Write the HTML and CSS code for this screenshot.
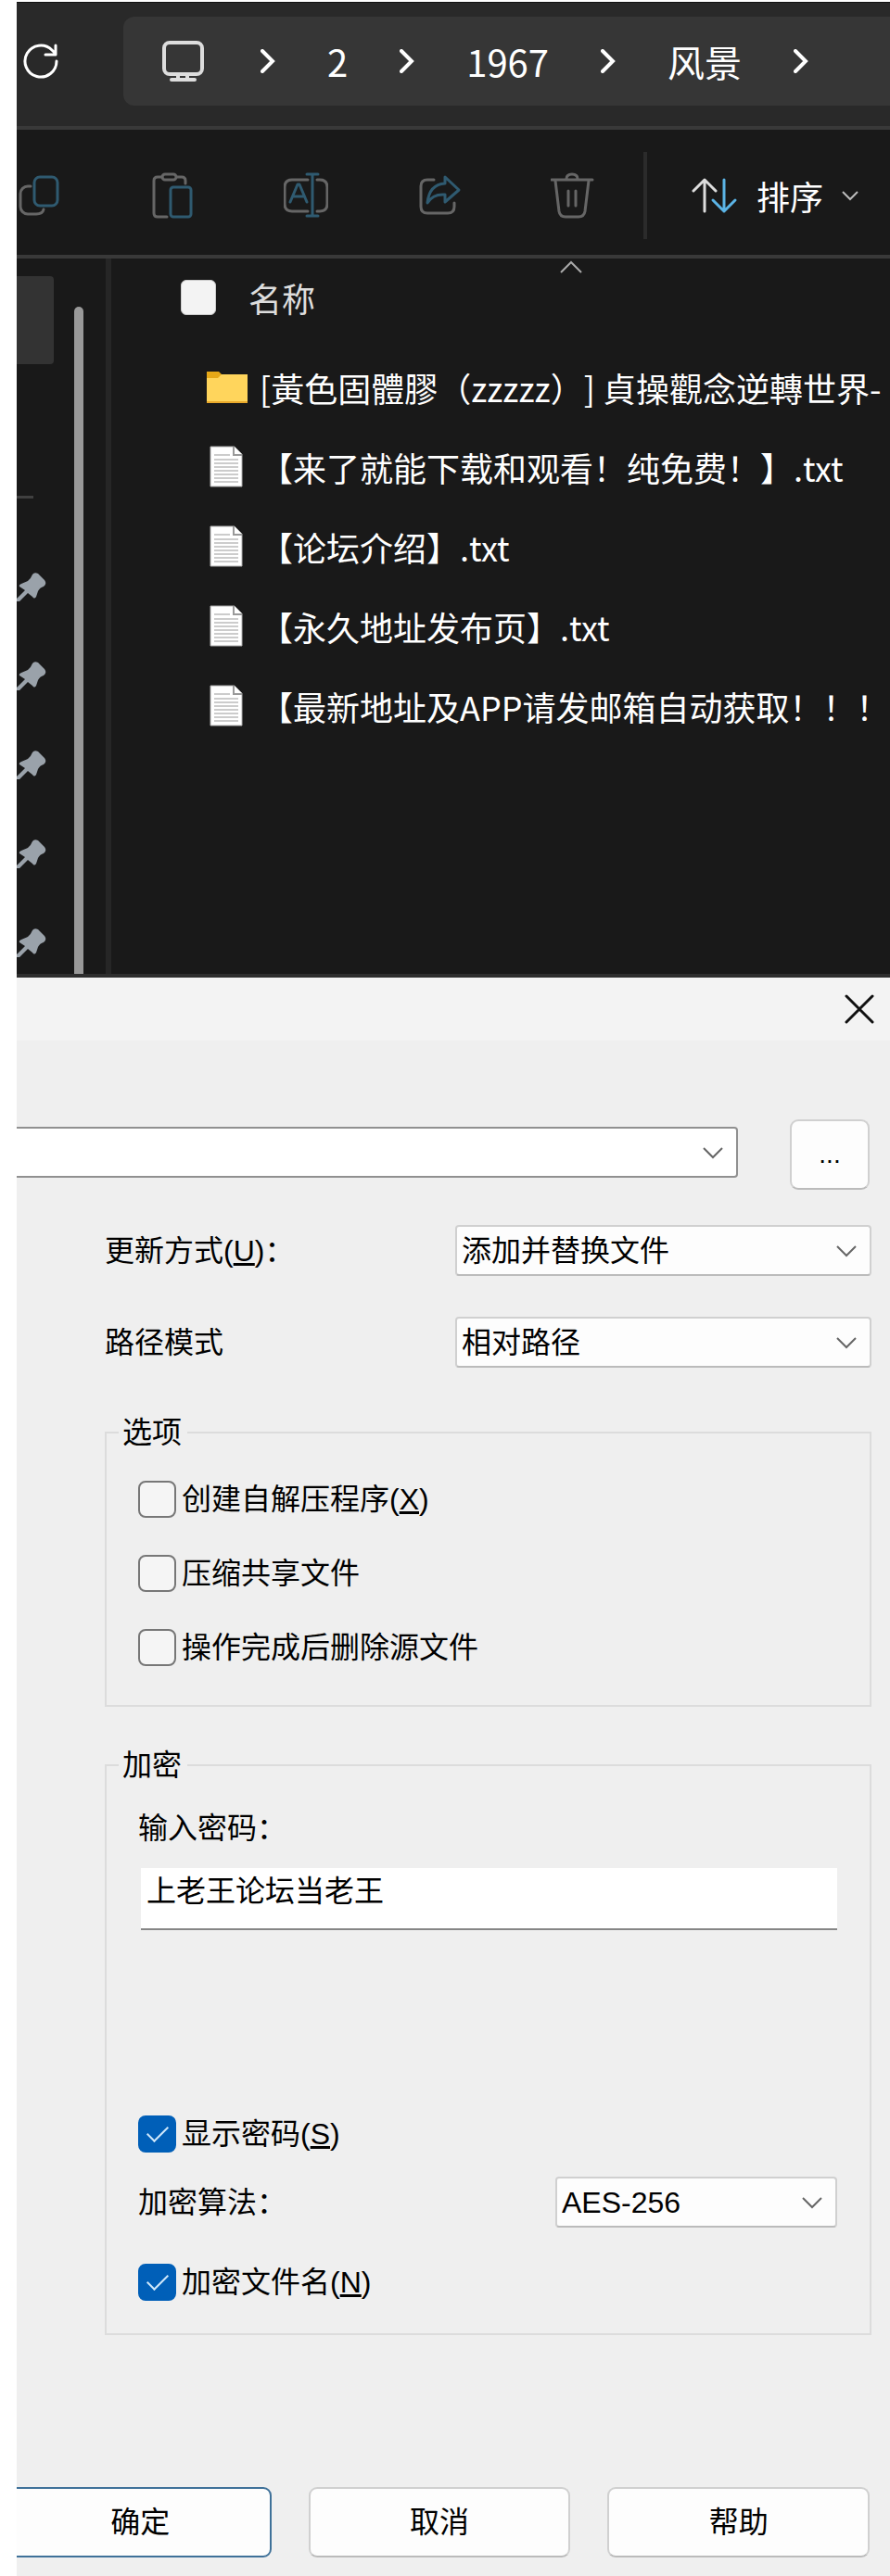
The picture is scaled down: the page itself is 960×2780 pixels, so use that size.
FILE: index.html
```html
<!DOCTYPE html>
<html lang="zh-CN">
<head>
  <meta charset="UTF-8">
  <meta name="viewport" content="width=device-width, initial-scale=1.0">
  <title>风景</title>
  <link rel="stylesheet" href="styles.css">
</head>
<body>
  <section class="explorer">
    <div class="address-bar">
      <button type="button" class="icon-btn refresh" aria-label="刷新">
        <svg width="40" height="40" viewBox="0 0 40 40" fill="none" stroke="#fff" stroke-width="3" stroke-linecap="round" stroke-linejoin="round">
          <path d="M37 20A17 17 0 1 1 32 8L36 12M36 3v10H25"/>
        </svg>
      </button>
      <nav class="breadcrumbs">
        <svg class="monitor" width="48" height="46" viewBox="0 0 48 46" fill="none" stroke="#ddd" stroke-width="4" stroke-linecap="round">
          <rect x="4" y="3" width="41" height="34" rx="6"/>
          <path d="M19 38v5M29 38v5M12 43h25"/>
        </svg>
        <svg class="crumb-arrow" width="16" height="26" viewBox="0 0 16 26"><path d="M2 2l11 11L2 24"/></svg>
        <a href="#">2</a>
        <svg class="crumb-arrow" width="16" height="26" viewBox="0 0 16 26"><path d="M2 2l11 11L2 24"/></svg>
        <a href="#">1967</a>
        <svg class="crumb-arrow" width="16" height="26" viewBox="0 0 16 26"><path d="M2 2l11 11L2 24"/></svg>
        <a href="#">风景</a>
        <svg class="crumb-arrow" width="16" height="26" viewBox="0 0 16 26"><path d="M2 2l11 11L2 24"/></svg>
      </nav>
    </div>

    <div class="toolbar">
      <button type="button" class="icon-btn" aria-label="复制">
        <svg class="tool-icon" width="48" height="52" viewBox="0 0 48 52">
          <path class="gray" d="M15 16H12a8 8 0 0 0-8 8v14a8 8 0 0 0 8 8h9q7 0 8-5"/>
          <rect class="blue" x="19" y="6" width="25" height="31" rx="6"/>
        </svg>
      </button>
      <button type="button" class="icon-btn" aria-label="粘贴">
        <svg class="tool-icon" width="48" height="52" viewBox="0 0 48 52">
          <path class="gray" d="M18 49H8q-4 0-4-4V10q0-4 4-4h5M29 6h5q4 0 4 4v3"/>
          <rect class="gray" x="13" y="3" width="15" height="6" rx="3"/>
          <rect class="blue" x="22" y="17" width="22" height="32" rx="3"/>
        </svg>
      </button>
      <button type="button" class="icon-btn" aria-label="重命名">
        <svg class="tool-icon" width="48" height="52" viewBox="0 0 48 52">
          <path class="gray" d="M26 9H9q-8 0-8 8v18q0 8 8 8h17M36 9h3q8 0 8 8v18q0 8-8 8h-3"/>
          <path class="blue" d="M7 33l8-19h2l8 19M10 27h12M31 4v43M25 3h12M25 48h12"/>
        </svg>
      </button>
      <button type="button" class="icon-btn" aria-label="共享">
        <svg class="tool-icon" width="48" height="52" viewBox="0 0 48 52">
          <path class="gray" d="M18 9H11q-7 0-7 7v22q0 7 7 7h22q7 0 7-7v-4"/>
          <path class="blue" d="M11 34Q13 14 30 13V6l15 14-15 13v-8Q17 24 11 34z"/>
        </svg>
      </button>
      <button type="button" class="icon-btn" aria-label="删除">
        <svg class="tool-icon" width="48" height="52" viewBox="0 0 48 52">
          <path class="gray" d="M1 9h44M5 10l4 33q1 6 7 6h14q6 0 7-6l4-33M17 8q0-5 6-5t6 5M19 21v16M27 21v16"/>
        </svg>
      </button>
      <span class="toolbar-divider"></span>
      <button type="button" class="sort-btn">
        <svg width="50" height="40" viewBox="0 0 50 40" fill="none" stroke-width="3" stroke-linecap="round" stroke-linejoin="round">
          <path stroke="#ddd" d="M14 37V3M2 15L14 3l12 12"/>
          <path stroke="#5bb4e6" d="M35 3v34M23 25l12 12 12-12"/>
        </svg>
        <span>排序</span>
        <svg width="18" height="12" viewBox="0 0 18 12" fill="none" stroke="#bbb" stroke-width="2"><path d="M1 2l8 8 8-8"/></svg>
      </button>
    </div>

    <div class="explorer-body">
      <aside class="sidebar">
        <div class="nav-column">
          <span class="nav-selected"></span>
          <span class="nav-line"></span>
          <div class="pins">
            <svg class="pin" width="32" height="32" viewBox="0 0 32 32"><path d="M17 2Q19-1 23 1L30 8Q33 12 29 15Q25 16 23 20L21 26Q19 29 17 26L12 22L3 31L0 31V28L9 19L3 15Q2 13 5 12L12 9Q15 7 17 2z"/></svg>
            <svg class="pin" width="32" height="32" viewBox="0 0 32 32"><path d="M17 2Q19-1 23 1L30 8Q33 12 29 15Q25 16 23 20L21 26Q19 29 17 26L12 22L3 31L0 31V28L9 19L3 15Q2 13 5 12L12 9Q15 7 17 2z"/></svg>
            <svg class="pin" width="32" height="32" viewBox="0 0 32 32"><path d="M17 2Q19-1 23 1L30 8Q33 12 29 15Q25 16 23 20L21 26Q19 29 17 26L12 22L3 31L0 31V28L9 19L3 15Q2 13 5 12L12 9Q15 7 17 2z"/></svg>
            <svg class="pin" width="32" height="32" viewBox="0 0 32 32"><path d="M17 2Q19-1 23 1L30 8Q33 12 29 15Q25 16 23 20L21 26Q19 29 17 26L12 22L3 31L0 31V28L9 19L3 15Q2 13 5 12L12 9Q15 7 17 2z"/></svg>
            <svg class="pin" width="32" height="32" viewBox="0 0 32 32"><path d="M17 2Q19-1 23 1L30 8Q33 12 29 15Q25 16 23 20L21 26Q19 29 17 26L12 22L3 31L0 31V28L9 19L3 15Q2 13 5 12L12 9Q15 7 17 2z"/></svg>
          </div>
        </div>
        <span class="scroll-thumb"></span>
      </aside>

      <div class="files">
        <div class="files-header">
          <input type="checkbox" id="selectAll" class="select-all">
          <label for="selectAll">名称</label>
          <svg class="sort-mark" width="24" height="14" viewBox="0 0 24 14" fill="none" stroke="#aaa" stroke-width="2"><path d="M1 13L12 2l11 11"/></svg>
        </div>
        <ul class="file-list">
          <li>
            <svg class="file-icon" width="46" height="46" viewBox="0 0 46 46">
              <path fill="#e6a817" d="M1 6h13l4 4v9H1z"/>
              <path fill="#ffd55c" d="M1 13h12l4-4h28v29q0 1-1 1H2q-1 0-1-1z"/>
              <path fill="#e9a92b" d="M1 38h44v2H1z"/>
            </svg>
            <span>[黃色固體膠（zzzzz）] 貞操觀念逆轉世界-</span>
          </li>
          <li>
            <svg class="file-icon" width="46" height="46" viewBox="0 0 46 46">
              <path fill="#fff" stroke="#aaa" d="M5 1h26l8 8v35H5z"/>
              <path fill="none" stroke="#999" stroke-width="2" d="M30 1v9h9"/>
              <path stroke="#999" d="M9 10h17M9 15h26M9 19h26M9 23h26M9 27h26M9 31h26M9 35h26M9 39h26"/>
            </svg>
            <span>【来了就能下载和观看！纯免费！】.txt</span>
          </li>
          <li>
            <svg class="file-icon" width="46" height="46" viewBox="0 0 46 46">
              <path fill="#fff" stroke="#aaa" d="M5 1h26l8 8v35H5z"/>
              <path fill="none" stroke="#999" stroke-width="2" d="M30 1v9h9"/>
              <path stroke="#999" d="M9 10h17M9 15h26M9 19h26M9 23h26M9 27h26M9 31h26M9 35h26M9 39h26"/>
            </svg>
            <span>【论坛介绍】.txt</span>
          </li>
          <li>
            <svg class="file-icon" width="46" height="46" viewBox="0 0 46 46">
              <path fill="#fff" stroke="#aaa" d="M5 1h26l8 8v35H5z"/>
              <path fill="none" stroke="#999" stroke-width="2" d="M30 1v9h9"/>
              <path stroke="#999" d="M9 10h17M9 15h26M9 19h26M9 23h26M9 27h26M9 31h26M9 35h26M9 39h26"/>
            </svg>
            <span>【永久地址发布页】.txt</span>
          </li>
          <li>
            <svg class="file-icon" width="46" height="46" viewBox="0 0 46 46">
              <path fill="#fff" stroke="#aaa" d="M5 1h26l8 8v35H5z"/>
              <path fill="none" stroke="#999" stroke-width="2" d="M30 1v9h9"/>
              <path stroke="#999" d="M9 10h17M9 15h26M9 19h26M9 23h26M9 27h26M9 31h26M9 35h26M9 39h26"/>
            </svg>
            <span>【最新地址及APP请发邮箱自动获取！！！</span>
          </li>
        </ul>
      </div>
    </div>
  </section>

  <form class="dialog">
    <div class="title-bar">
      <button type="button" class="icon-btn" aria-label="关闭">
        <svg width="32" height="32" viewBox="0 0 32 32" fill="none" stroke="#111" stroke-width="3" stroke-linecap="round"><path d="M2 2l28 28M30 2L2 30"/></svg>
      </button>
    </div>

    <div class="dialog-body">
      <div class="archive-row">
        <div class="select-box archive">
          <select aria-label="压缩包"><option></option></select>
          <svg class="chevron" width="22" height="14" viewBox="0 0 22 14"><path d="M1 2l10 10L21 2"/></svg>
        </div>
        <button type="button" class="btn browse">...</button>
      </div>

      <div class="field-row">
        <label for="updateMode">更新方式(<u>U</u>)：</label>
        <div class="select-box">
          <select id="updateMode"><option>添加并替换文件</option></select>
          <svg class="chevron" width="22" height="14" viewBox="0 0 22 14"><path d="M1 2l10 10L21 2"/></svg>
        </div>
      </div>
      <div class="field-row">
        <label for="pathMode">路径模式</label>
        <div class="select-box">
          <select id="pathMode"><option>相对路径</option></select>
          <svg class="chevron" width="22" height="14" viewBox="0 0 22 14"><path d="M1 2l10 10L21 2"/></svg>
        </div>
      </div>

      <fieldset class="options">
        <legend>选项</legend>
        <label class="check"><input type="checkbox"><span>创建自解压程序(<u>X</u>)</span></label>
        <label class="check"><input type="checkbox"><span>压缩共享文件</span></label>
        <label class="check"><input type="checkbox"><span>操作完成后删除源文件</span></label>
      </fieldset>

      <fieldset class="encryption">
        <legend>加密</legend>
        <label for="password">输入密码：</label>
        <input type="text" id="password" class="password" value="上老王论坛当老王">
        <label class="check"><input type="checkbox" checked><span>显示密码(<u>S</u>)</span></label>
        <div class="method-row">
          <label for="method">加密算法：</label>
          <div class="select-box method">
            <select id="method"><option>AES-256</option></select>
            <svg class="chevron" width="22" height="14" viewBox="0 0 22 14"><path d="M1 2l10 10L21 2"/></svg>
          </div>
        </div>
        <label class="check"><input type="checkbox" checked><span>加密文件名(<u>N</u>)</span></label>
      </fieldset>
    </div>

    <div class="actions">
      <button type="submit" class="btn primary">确定</button>
      <button type="button" class="btn">取消</button>
      <button type="button" class="btn">帮助</button>
    </div>
  </form>
</body>
</html>
```
FILE: styles.css
```css
* {
  margin: 0;
  padding: 0;
  box-sizing: border-box;
}

body {
  padding: 2px 0 0 18px;
  background: #fff;
  overflow-x: hidden;
  text-spacing-trim: space-all;
}

svg {
  display: block;
  flex-shrink: 0;
}

.icon-btn {
  border: none;
  background: none;
  cursor: pointer;
}

/* Explorer */
.explorer {
  background: #191919;
  color: #fff;
  font-family: "Noto Sans CJK SC", sans-serif;
  font-size: 36px;
  line-height: 48px;
  border-bottom: 4px solid #2e2e2e;
  overflow: hidden;
}

.address-bar {
  display: flex;
  align-items: center;
  height: 138px;
  padding-bottom: 8px;
  background: #292929;
  border-top: 1px solid #111;
  border-bottom: 4px solid #393939;
}

.refresh {
  margin-left: 6px;
}

.breadcrumbs {
  flex: 1;
  display: flex;
  align-items: center;
  gap: 56px;
  height: 96px;
  margin-left: 69px;
  padding-left: 40px;
  background: #363636;
  border-radius: 12px 0 0 12px;
  font-size: 40px;
}

.breadcrumbs a {
  color: #fff;
  text-decoration: none;
}

.monitor {
  margin-right: 4px;
}

.crumb-arrow {
  fill: none;
  stroke: #fff;
  stroke-width: 4;
  stroke-linecap: round;
}

.toolbar {
  display: flex;
  align-items: center;
  gap: 96px;
  height: 139px;
  padding-top: 6px;
  border-bottom: 4px solid #393939;
}

.tool-icon {
  fill: none;
  stroke-width: 3;
  stroke-linecap: round;
  stroke-linejoin: round;
}

.gray {
  stroke: #666;
}

.blue {
  stroke: #2f5a70;
}

.toolbar-divider {
  width: 4px;
  height: 94px;
  margin: 0 -48px 0 -44px;
  background: #2b2b2b;
}

.sort-btn {
  display: flex;
  align-items: center;
  gap: 20px;
  border: none;
  background: none;
  color: #fff;
  font: inherit;
  cursor: pointer;
}

.explorer-body {
  display: flex;
}

.sidebar {
  display: flex;
  align-items: stretch;
  width: 102px;
  border-right: 6px solid #262626;
}

.nav-column {
  width: 62px;
  padding-top: 19px;
}

.nav-selected {
  display: block;
  width: 40px;
  height: 95px;
  background: #333;
  border-radius: 0 4px 4px 0;
}

.nav-line {
  display: block;
  width: 18px;
  height: 3px;
  margin-top: 142px;
  background: #404040;
}

.pins {
  display: flex;
  flex-direction: column;
  gap: 64px;
  margin: 80px 0 17px;
}

.pin {
  fill: #9aa2aa;
}

.scroll-thumb {
  width: 10px;
  margin-top: 52px;
  background: #999;
  border-radius: 5px 5px 0 0;
}

.files {
  flex: 1;
  min-width: 0;
  padding-left: 75px;
}

.files-header {
  position: relative;
  display: flex;
  align-items: center;
  gap: 35px;
  height: 96px;
  padding-bottom: 12px;
  color: #ddd;
}

.select-all {
  appearance: none;
  width: 38px;
  height: 38px;
  background: #f3f3f3;
  border: 1px solid #ccc;
  border-radius: 6px;
}

.sort-mark {
  position: absolute;
  top: 2px;
  left: 409px;
}

.file-list {
  list-style: none;
}

.file-list li {
  display: flex;
  align-items: center;
  gap: 12px;
  height: 86px;
  padding-left: 27px;
  white-space: nowrap;
}

/* Dialog */
.dialog {
  background: #efefef;
  color: #000;
  font-family: "Liberation Sans", "Noto Sans CJK SC", sans-serif;
  font-size: 32px;
  line-height: 36px;
  padding-bottom: 20px;
  overflow: hidden;
}

.title-bar {
  display: flex;
  justify-content: flex-end;
  align-items: center;
  height: 68px;
  padding-right: 17px;
  background: #f3f3f3;
}

.dialog-body {
  padding: 85px 20px 0 95px;
}

.archive-row {
  display: flex;
  align-items: flex-start;
  gap: 56px;
  margin-left: -95px;
  margin-right: 2px;
  margin-bottom: 38px;
}

.select-box {
  position: relative;
  height: 55px;
}

.select-box select {
  appearance: none;
  width: 100%;
  height: 100%;
  padding: 0 60px 0 5px;
  background: #fdfdfd;
  border: 2px solid #d0d0d0;
  border-bottom-color: #bbb;
  border-radius: 4px;
  color: #000;
  font: inherit;
}

.archive {
  flex: 1;
  margin-top: 8px;
}

.archive select {
  border-color: #909090;
  border-left: none;
  border-radius: 0 4px 4px 0;
  background: #fff;
}

.chevron {
  position: absolute;
  top: 21px;
  right: 16px;
  fill: none;
  stroke: #666;
  stroke-width: 2;
  pointer-events: none;
}

.btn {
  height: 76px;
  background: #fdfdfd;
  border: 2px solid #d0d0d0;
  border-bottom-color: #bbb;
  border-radius: 9px;
  color: #000;
  font: inherit;
  cursor: pointer;
}

.btn.browse {
  width: 86px;
  font-size: 28px;
}

.btn.primary {
  border-color: #3f7199;
}

.field-row {
  display: grid;
  grid-template-columns: 378px 1fr;
  align-items: center;
  margin-bottom: 44px;
}

fieldset {
  display: flex;
  flex-direction: column;
  border: 2px solid #dcdcdc;
  padding: 0 35px 0 34px;
}

legend {
  margin-left: -21px;
  padding: 0 6px 0 4px;
}

.options {
  gap: 40px;
  margin-top: 52px;
  padding-top: 34px;
  padding-bottom: 42px;
}

.encryption {
  margin-top: 45px;
  padding-top: 32px;
  padding-bottom: 35px;
}

.check {
  display: flex;
  align-items: center;
  gap: 6px;
  height: 40px;
}

.check input {
  appearance: none;
  display: grid;
  place-items: center;
  width: 41px;
  height: 40px;
  background: #f5f5f5;
  border: 2px solid #777;
  border-radius: 8px;
}

.check input:checked {
  background: #005fb8;
  border-color: #005fb8;
}

/* tick mark */
.check input:checked::before {
  content: "";
  width: 20px;
  height: 10px;
  margin-bottom: 6px;
  border-left: 2px solid #cfe8fb;
  border-bottom: 2px solid #cfe8fb;
  transform: rotate(-45deg);
}

.password {
  height: 67px;
  margin: 25px 0 200px 3px;
  padding: 0 6px 22px;
  background: #fff;
  border: none;
  border-bottom: 2px solid #868686;
  color: #000;
  font: inherit;
}

.method-row {
  display: flex;
  justify-content: space-between;
  align-items: center;
  margin: 26px 0 39px;
}

.method {
  width: 304px;
}

.actions {
  display: grid;
  grid-template-columns: 1fr 1fr 1fr;
  gap: 40px;
  margin: 164px 22px 0 -8px;
}
```
